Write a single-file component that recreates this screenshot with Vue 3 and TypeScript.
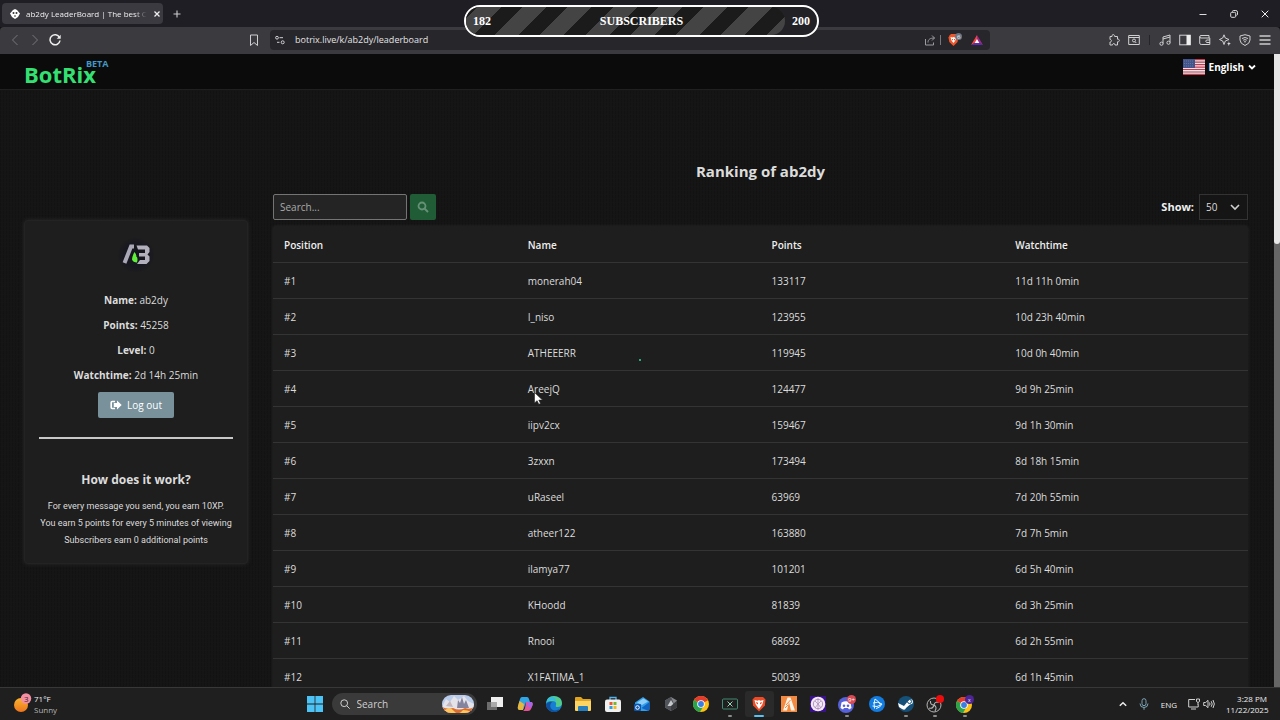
<script setup lang="ts">
import { ref } from 'vue'

interface Entry {
  name: string
  points: number
  watchtime: string
}

const entries: Entry[] = [
  { name: 'monerah04', points: 133117, watchtime: '11d 11h 0min' },
  { name: 'I_niso', points: 123955, watchtime: '10d 23h 40min' },
  { name: 'ATHEEERR', points: 119945, watchtime: '10d 0h 40min' },
  { name: 'AreejQ', points: 124477, watchtime: '9d 9h 25min' },
  { name: 'iipv2cx', points: 159467, watchtime: '9d 1h 30min' },
  { name: '3zxxn', points: 173494, watchtime: '8d 18h 15min' },
  { name: 'uRaseel', points: 63969, watchtime: '7d 20h 55min' },
  { name: 'atheer122', points: 163880, watchtime: '7d 7h 5min' },
  { name: 'ilamya77', points: 101201, watchtime: '6d 5h 40min' },
  { name: 'KHoodd', points: 81839, watchtime: '6d 3h 25min' },
  { name: 'Rnooi', points: 68692, watchtime: '6d 2h 55min' },
  { name: 'X1FATIMA_1', points: 50039, watchtime: '6d 1h 45min' },
]

const profile = [
  { label: 'Name:', value: 'ab2dy' },
  { label: 'Points:', value: '45258' },
  { label: 'Level:', value: '0' },
  { label: 'Watchtime:', value: '2d 14h 25min' },
]

const goal = { current: 182, target: 200 }
const query = ref('')
const pageSize = ref('50')
const address = ref('botrix.live/k/ab2dy/leaderboard')
const taskQuery = ref('')
</script>

<template>
  <div class="screen">
    <div class="tabstrip">
      <div class="tab">
        <svg class="i10" viewBox="0 0 10 10"><path d="M5 0 7 1 10 4.500 8 8 5 10 2 8 0 4.500 3 1Z" fill="#fff" /><circle cx="3.500" cy="4" r="1" fill="#333" /><circle cx="6.500" cy="4" r="1" fill="#333" /><path d="M4 7h2" stroke="#333" /></svg>
        <span class="tab-title">ab2dy LeaderBoard | The best C</span>
        <button class="bare" aria-label="Close tab"><svg class="i8" viewBox="0 0 8 8"><path d="M1.500 1.500l5 5M6.500 1.500l-5 5" stroke="#eee" stroke-width="1.300" /></svg></button>
      </div>
      <button class="bare newtab" aria-label="New tab"><svg class="i8" viewBox="0 0 8 8"><path d="M4 .5v7M.5 4h7" stroke="#ccc" stroke-width="1.100" /></svg></button>
      <div class="winbtns">
        <button class="bare" aria-label="Minimize"><svg class="i8" viewBox="0 0 8 8"><path d="M.5 4.500h7" stroke="#ddd" /></svg></button>
        <button class="bare" aria-label="Restore"><svg class="i8" viewBox="0 0 8 8" fill="none" stroke="#ddd"><rect x=".7" y="2.300" width="5" height="5" rx="1" /><path d="M2.500 1.800V1.500q0-1 1-1h2.300q1.700 0 1.700 1.700v2q0 1-1 1.200" /></svg></button>
        <button class="bare" aria-label="Close"><svg class="i8" viewBox="0 0 8 8"><path d="M.7.7l6.600 6.600M7.300.7L.7 7.300" stroke="#eee" /></svg></button>
      </div>
    </div>

    <div class="toolbar">
      <div class="nav">
        <button class="bare" aria-label="Back"><svg class="i12" viewBox="0 0 12 12"><path d="M8.500 1 3.500 6l5 5" class="ln dim" /></svg></button>
        <button class="bare" aria-label="Forward"><svg class="i12" viewBox="0 0 12 12"><path d="m3.500 1 5 5-5 5" class="ln dim" /></svg></button>
        <button class="bare" aria-label="Reload"><svg class="i12" viewBox="0 0 12 12"><path d="M10.500 3.500A5 5 0 1 0 11 6.500" class="ln thick" /><path d="M11.700.8v4H7.700Z" fill="#eee" /></svg></button>
      </div>
      <button class="bare bookmark" aria-label="Bookmark"><svg class="i12" viewBox="0 0 12 12"><path d="M2.500 1h7v10.500L6 8.500l-3.500 3z" class="ln" /></svg></button>
      <div class="address">
        <svg class="i10" viewBox="0 0 10 10"><g class="ln"><circle cx="2" cy="2.700" r="1.400" /><path d="M4.500 2.700H8M2 7.300h2.500" /><circle cx="7.700" cy="7.300" r="1.500" /></g></svg>
        <input v-model="address" aria-label="Address" />
        <svg class="i12" viewBox="0 0 12 12"><path d="M1.500 5v6h8V8.500M4 8.500C4 5.500 6 4 10.500 4M8 1.500 10.500 4 8 6.500" class="ln soft-line" /></svg>
        <i class="vbar"></i>
        <svg class="brave" viewBox="0 0 16 14"><path d="M2.500 2.500 4 1h5l1.500 1.500.8 2-.8 4.500L6.500 13 2.300 9 1.500 4.500Z" fill="#f1562b" /><path d="M3.500 4 5.500 4.500 6.500 4 7.500 4.500 9.500 4 8.500 7 7.700 8.500 6.500 10 5.200 8.500 4.300 7Z" fill="#fff" /><path d="M5 6h1v1.200H5zM7 6h1v1.200H7z" fill="#f1562b" /><circle cx="11.500" cy="3.500" r="3.500" fill="#6d7684" /><text x="10" y="5.600" font-size="6" fill="#fff">6</text></svg>
        <svg class="i12 bat" viewBox="0 0 12 12"><path d="M6 1v7L0 11Z" fill="#f0443c" /><path d="M6 1v7l6 3Z" fill="#97298c" /><path d="M0 11h12L6 7.500Z" fill="#5a2baa" /><path d="M6 5 3.700 9h4.600Z" fill="#fff" /></svg>
      </div>
      <div class="tools">
        <svg class="i12" viewBox="0 0 12 12"><path d="M2 2.500h2c-.5-2.500 3-2.500 2.700 0H9.500v2.700c2.500-.4 2.500 3 0 2.600V11H7c.2-2-2.500-2-2.500 0H2V8C4 8 4 5.500 2 5.500Z" class="ln" /></svg>
        <svg class="i12 after" viewBox="0 0 12 12"><path d="M.7 1.500h10.600v9H.7zM.7 3.500h10.600" class="ln" /><circle cx="6" cy="6.500" r="1.500" class="ln" /><path d="m7 7.700 1.300 1.300" class="ln" /></svg>
        <i class="vbar dark"></i>
        <svg class="i12" viewBox="0 0 12 12"><path d="M4 9.500V3l7-2v7.500M4 5l7-2" class="ln" /><circle cx="2.500" cy="9.700" r="1.600" class="ln" /><circle cx="9.500" cy="8.700" r="1.600" class="ln" /></svg>
        <svg class="i12" viewBox="0 0 12 12"><rect x=".7" y="1.200" width="10.600" height="9.600" class="ln" /><path d="M7.500 1h4v10h-4z" fill="#eee" /></svg>
        <svg class="i12" viewBox="0 0 12 12"><path d="M10 4V1.500H2Q.7 1.500.7 3v6q0 1.500 1.500 1.500h8.600V4H2Q.7 4 .7 2.700M11 6H7.500Q6 7.200 7.500 8.500H11" class="ln" /></svg>
        <svg class="i12" viewBox="0 0 12 12"><path d="M5 .8 6.300 4 10 5.500 6.300 7 5 10.500 3.700 7 .5 5.500 3.700 4Z" class="ln" /><path d="m9.800 7.300.6 1.700 1.500.6-1.500.6-.6 1.700-.6-1.700L8 9.600l1.500-.6Z" fill="#ddd" /></svg>
        <svg class="i12" viewBox="0 0 12 12"><path d="M6 .7 11 2v4q0 3.500-5 5.500Q1 9.500 1 6V2Z" class="ln" /><path d="M3 4.500q3-2 6 0M4.200 6.200q1.800-1.200 3.600 0" class="ln" /><circle cx="6" cy="7.800" r=".8" fill="#ddd" /></svg>
        <svg class="i12" viewBox="0 0 12 12"><path d="M.5 2h11M.5 6h11M.5 10h11" stroke="#ccc" stroke-width="1.500" /></svg>
      </div>
    </div>

    <div class="viewport">
      <div class="page">
        <header class="site">
          <a class="brand" href="#">BotRix<sup>BETA</sup></a>
          <button class="bare lang">
            <svg class="flag" viewBox="0 0 22 16"><path d="M0 0h22v16H0z" fill="#e9e4e6" /><path d="M0 .7h22M0 3.200h22M0 5.600h22M0 8.100h22M0 10.500h22M0 13h22M0 15.400h22" stroke="#c43a50" stroke-width="1.200" /><path d="M0 0h12v9H0z" fill="#41548c" /><path d="M1 2h10M1 4.500h10M1 7h10" stroke="#66749f" stroke-dasharray="1 1" /></svg>
            English
            <svg class="i8" viewBox="0 0 8 8"><path d="m1 2.500 3 3 3-3" class="ln bold" /></svg>
          </button>
        </header>

        <main class="columns">
          <aside class="card">
            <svg class="avatar" viewBox="0 0 40 36"><defs><radialGradient id="glow"><stop offset="0" stop-color="#15151f" /><stop offset=".7" stop-color="#181820" /><stop offset="1" stop-color="#1e1e1e" /></radialGradient></defs><ellipse cx="20" cy="18" rx="19" ry="18" fill="url(#glow)" /><path d="M8.500 26 15 9.500h3" fill="none" stroke="#aaa8b6" stroke-width="4" /><path d="M20.500 8.500H31l2.500 2.500v4l-2 2.500 2 2V24l-3 3H21l3-4h5v-3.500h-6v-3.500h6v-3.500h-7Z" fill="#b2b0bc" /><path d="M18.500 15q2 2 1.800 4.500 2 1 .7 6-4 0-5-3 .2-3.500 2.500-7.500Z" fill="#5fee39" /></svg>
            <dl class="facts">
              <div v-for="item in profile" :key="item.label"><dt>{{ item.label }}</dt>{{ ' ' }}<dd>{{ item.value }}</dd></div>
            </dl>
            <button class="logout">
              <svg class="i12" viewBox="0 0 12 12"><path d="M5 2.500H2.200q-1 0-1 1v5q0 1 1 1H5" fill="none" stroke="#fff" stroke-width="1.600" /><path d="M7 1.500 11.700 6 7 10.500V8H3.800V4H7Z" fill="#fff" /></svg>
              Log out
            </button>
            <hr />
            <h3>How does it work?</h3>
            <p>For every message you send, you earn 10XP.</p>
            <p>You earn 5 points for every 5 minutes of viewing</p>
            <p>Subscribers earn 0 additional points</p>
          </aside>

          <section class="ranking">
            <h2>Ranking of ab2dy</h2>
            <div class="controls">
              <form class="search" @submit.prevent>
                <input v-model="query" type="text" placeholder="Search..." aria-label="Search players" />
                <button aria-label="Search"><svg class="i12" viewBox="0 0 12 12"><circle cx="5" cy="5" r="3.500" fill="none" stroke="#659176" stroke-width="1.800" /><path d="m7.500 7.500 3.500 3.500" stroke="#659176" stroke-width="2" /></svg></button>
              </form>
              <div class="show">
                <label for="page-size">Show:</label>
                <span class="pick">
                  <select id="page-size" v-model="pageSize"><option>50</option><option>100</option></select>
                  <svg class="i10" viewBox="0 0 10 10"><path d="m1 3 4 4 4-4" class="ln" stroke-width="1.600" /></svg>
                </span>
              </div>
            </div>
            <table>
              <thead>
                <tr><th>Position</th><th>Name</th><th>Points</th><th>Watchtime</th></tr>
              </thead>
              <tbody>
                <tr v-for="(entry, i) in entries" :key="entry.name">
                  <td>#{{ i + 1 }}</td><td>{{ entry.name }}</td><td>{{ entry.points }}</td><td>{{ entry.watchtime }}</td>
                </tr>
              </tbody>
            </table>
          </section>
        </main>
      </div>
      <div class="scrollbar"><i></i></div>
    </div>

    <footer class="taskbar">
      <div class="weather">
        <svg class="sun" viewBox="0 0 18 20"><defs><linearGradient id="sun" x2="0" y2="1"><stop stop-color="#f9b52d" /><stop offset="1" stop-color="#ee751f" /></linearGradient></defs><circle cx="7" cy="12" r="7" fill="url(#sun)" /><circle cx="12" cy="5.500" r="5.200" fill="#f58fa0" /><text x="10" y="8.500" font-size="8" fill="#33202a">3</text></svg>
        <div><div>71°F</div><div class="soft">Sunny</div></div>
      </div>
      <div class="dock">
        <button class="bare start" aria-label="Start"><svg class="i16" viewBox="0 0 16 16"><path d="M0 0h7.600v7.600H0zM8.400 0H16v7.600H8.400zM0 8.400h7.600V16H0zM8.400 8.400H16V16H8.400z" fill="#4cc2f5" /></svg></button>
        <label class="tasksearch">
          <svg class="i10" viewBox="0 0 10 10"><circle cx="4.200" cy="4.200" r="3.400" class="ln" /><path d="m6.700 6.700 3 3" class="ln" /></svg>
          <input v-model="taskQuery" placeholder="Search" aria-label="Search Windows" />
          <svg class="scene" viewBox="0 0 32 18"><defs><clipPath id="pill"><rect width="32" height="18" rx="9" /></clipPath></defs><g clip-path="url(#pill)"><path d="M0 0h32v18H0z" fill="#b9cbea" /><path d="M0 12 4 4l4 3 4-6 4 4 6-4 4 5 6 3v9H0Z" fill="#e4e3ea" /><path d="m15 13 1-8 2 3 2-6 2 7 2-4 3 8Z" fill="#85849f" /><path d="m4 11 4-5 3 6Z" fill="#c2b5bb" /><path d="M0 12q6 3 11 1 6 3 12 0 5 2 9-1v6H0Z" fill="#dc6c2c" /><path d="M3 15q5-4 9 1t9-1q5 0 8 2v1H3Z" fill="#ffc55a" /></g></svg>
        </label>
        <div class="apps">
          <button class="bare" aria-label="Task view"><svg class="i16" viewBox="0 0 16 16"><path d="M0 6h10v8H0z" fill="#6c6c6c" /><path d="M4 1h12v10H4z" fill="#eee" /><path d="M4 6h6v5H4z" fill="#aaa" /></svg></button>
          <button class="bare" aria-label="Copilot"><svg class="i16" viewBox="0 0 16 16"><path d="M5 1h5q1.500 0 2 2l1 3H9L7 12q-.7 2-2 2H3q-3 0-2-4L3 3q.5-2 2-2Z" fill="#31a6e7" /><path d="M1 10 2.500 5 7 8l-1 6H3q-3 0-2-4Z" fill="#e8b63a" /><path d="M9 6h4q3.500 0 2.500 3.500L14 13q-.6 2-3 2H6q1.300-.5 2-3Z" fill="#e35595" /><path d="m11 6 4 0q1 1 .5 3L14 12l-4-2Z" fill="#a965e3" /></svg></button>
          <button class="bare" aria-label="Edge"><svg class="i16" viewBox="0 0 16 16"><circle cx="8" cy="8" r="8" fill="#167fd1" /><path d="M.3 7Q1 0 8 0q7.700.5 8 7 0 4-4.500 4Q9 11 10 9q1-4-4-4Q1.500 5 .3 7Z" fill="#52cb8b" /><path d="M.3 7Q1 1 7 1q3 1 3 5Q8 3.500 5 4 2 4.500.3 7Z" fill="#35bce4" /><path d="M6 6Q3 9 5 12.500 8 16 13.500 13q-2.500 4-7 2.800Q0 14 0 8.500 2 5 6 6Z" fill="#11509d" /></svg></button>
          <button class="bare" aria-label="File Explorer"><svg class="i16" viewBox="0 0 16 16"><path d="M0 2q0-1 1-1h5l2 2h7q1 0 1 1v10H0Z" fill="#e0a420" /><path d="M0 5h16v9q0 1-1 1H1q-1 0-1-1Z" fill="#fbd463" /><path d="M3 15v-4q0-1 1-1h8q1 0 1 1v4Z" fill="#257fbe" /></svg></button>
          <button class="bare" aria-label="Store"><svg class="i16" viewBox="0 0 16 16"><path d="M5 4V1.500h6V4" fill="none" stroke="#55b4ec" stroke-width="1.300" /><rect y="3.500" width="16" height="12.500" rx="2" fill="#f0f0f0" /><path d="M4.500 6h3v3h-3z" fill="#ef5430" /><path d="M8.500 6h3v3h-3z" fill="#77b72e" /><path d="M4.500 10h3v3h-3z" fill="#289fe0" /><path d="M8.500 10h3v3h-3z" fill="#f4b825" /></svg></button>
          <button class="bare" aria-label="Outlook"><svg class="i16" viewBox="0 0 16 16"><path d="M1 6.500 9 1l6.500 4.500V13q0 2-2 2H3q-2 0-2-2Z" fill="#2f9fea" /><path d="m3 6.500 6.500-4L14 5.500 8 9Z" fill="#8fcdf7" /><path d="m15.500 6-8 6 7 3q1-1 1-2Z" fill="#1262c4" /><rect y="8" width="7" height="7" rx="1" fill="#0e55ae" /><circle cx="3.500" cy="11.500" r="1.800" fill="none" stroke="#fff" /></svg></button>
          <button class="bare" aria-label="Launcher"><svg class="i16" viewBox="0 0 16 16"><path d="m8 1 6 3.500v7L8 15l-6-3.500v-7Z" fill="#85878b" /><path d="m8 1 3 7-3 7-6-3.500v-7Z" fill="#505359" /><path d="m8 4 3.500 6h-7Z" fill="#c6c8cc" /><path d="M8 15v-5l6-5.500v7Z" fill="#3a3c40" /></svg></button>
          <button class="bare" aria-label="Chrome"><svg class="i16" viewBox="0 0 16 16"><circle cx="8" cy="8" r="8" fill="#fbc116" /><path d="M8 8 1.100 4A8 8 0 0 1 15 4.300Z" fill="#e33b2e" /><path d="M8 8 1.100 4A8 8 0 0 0 7 16l3.500-6Z" fill="#2ba24c" /><circle cx="8" cy="8" r="3.800" fill="#fff" /><circle cx="8" cy="8" r="2.900" fill="#3b7de0" /></svg></button>
          <button class="bare run" aria-label="Xbox remote"><svg class="i16" viewBox="0 0 16 16"><rect x=".5" y="3" width="15" height="10" rx="1" fill="none" stroke="#458a74" /><path d="m5.500 5.500 5 5M10.500 5.500l-5 5" stroke="#9bd4bb" /></svg></button>
          <button class="bare active" aria-label="Brave"><svg class="i16" viewBox="0 0 16 16"><path d="m4 1 8 0 2.500 2.500-.6 6L8 15.500 2 9.500 1.500 3.500Z" fill="#ef4a26" /><path d="m3.500 4 3 .7L8 4l1.500.7 3-.7-1 4L9.500 11 8 13l-1.500-2-2-3Z" fill="#fff" /><path d="m5 6 2 .7v1.800L5.500 7.600ZM11 6l-2 .7v1.800l1.500-.9Z" fill="#ef4a26" /></svg></button>
          <button class="bare" aria-label="FiveM"><svg class="i16" viewBox="0 0 16 16"><path d="M0 0h16v16H0z" fill="#f28a42" /><path d="M6.500 1.500h3L14 14.500h-4L8 6l-2 8.500H2Z" fill="#fff4e9" /><path d="m5 9 4.500-5M4 12l3-3" stroke="#f28a42" /></svg></button>
          <button class="bare" aria-label="Circle app"><svg class="i16" viewBox="0 0 16 16"><path d="M0 0h16v16H0z" fill="#391188" /><circle cx="8" cy="8" r="7.300" fill="#f4eaf7" /><circle cx="8" cy="8" r="4.700" fill="none" stroke="#ae91bb" /><path d="M8 2v12M5 5l3 3 3-3M5 12l3-4 3 4" fill="none" stroke="#ae91bb" stroke-width=".8" /></svg></button>
          <button class="bare run" aria-label="Discord"><svg class="i18" viewBox="0 0 18 18"><circle cx="8" cy="10" r="8" fill="#5662d9" /><path d="M3.500 7.500Q8 5 12.500 7.500l1 5.500-2.500 1.500-1-1.500H6l-1 1.500L2.500 13Z" fill="#fff" /><circle cx="6" cy="10.800" r="1.300" fill="#5662d9" /><circle cx="10" cy="10.800" r="1.300" fill="#5662d9" /><circle cx="13.500" cy="4.500" r="4.500" fill="#d94a55" /><text x="10" y="7" font-size="6" fill="#fff">9+</text></svg></button>
          <button class="bare" aria-label="Battle.net"><svg class="i16" viewBox="0 0 16 16"><circle cx="8" cy="8" r="8" fill="#137ce0" /><g fill="none" stroke="#e8f5ff"><path d="M5.500 12.500Q4.500 8 6 3q5 3 5.500 6-3 2.500-8 1M4 7q5-2 9 1-2 4-6 4.500" /></g></svg></button>
          <button class="bare run" aria-label="Steam"><svg class="i16" viewBox="0 0 16 16"><circle cx="8" cy="8" r="8" fill="#155078" /><path d="m0 7 6 3 4-5q2-3 4.500-1 1.500 4-2.500 4.500L8 12q-1 3-4 1L1 11Z" fill="#fff" /><circle cx="11.500" cy="5.500" r="2" fill="none" stroke="#155078" /></svg></button>
          <button class="bare run" aria-label="OBS Studio"><svg class="i18" viewBox="0 0 18 18"><circle cx="8" cy="10" r="7" fill="#222" stroke="#b5b5b5" /><path d="M8 10q-4 0-3.500-4M8 10q1-4 5-2.500M8 10q3.500 2 1 6M3 13q4 1 5-3" fill="none" stroke="#b5b5b5" stroke-width="1.100" /><circle cx="14" cy="4" r="4" fill="#ed0d0d" /></svg></button>
          <button class="bare run" aria-label="Chrome profile"><svg class="i18" viewBox="0 0 18 18"><circle cx="8" cy="10" r="8" fill="#fbc116" /><path d="M8 10 1.100 6A8 8 0 0 1 15 6.300Z" fill="#e33b2e" /><path d="M8 10 1.100 6A8 8 0 0 0 7 18l3.500-6Z" fill="#2ba24c" /><circle cx="8" cy="10" r="3.800" fill="#fff" /><circle cx="8" cy="10" r="2.900" fill="#3b7de0" /><circle cx="13.500" cy="4.500" r="4.500" fill="#4d2597" /><text x="12" y="6.500" font-size="5" fill="#fff">x</text></svg></button>
        </div>
      </div>
      <div class="tray">
        <svg class="i8" viewBox="0 0 8 8"><path d="m.8 5.700 3.200-3 3.200 3" class="ln thick" /></svg>
        <svg class="i12" viewBox="0 0 12 12"><rect x="4" y=".7" width="4" height="7" rx="2" fill="none" stroke="#7ba5b5" /><path d="M2 5.500q0 4 4 4t4-4M6 9.500v2.300" fill="none" stroke="#7ba5b5" /></svg>
        <span class="ime">ENG</span>
        <span class="status">
          <svg class="i12" viewBox="0 0 12 12"><path d="M7 1.500H.7V9h9.500V6.500M3 11h5" class="ln" /><path d="M8.500 1v2.500q1.500 2 3 0V1zM10 4.500V7" class="ln" /></svg>
          <svg class="i12" viewBox="0 0 12 12"><path d="M.7 4.500h2L5 2.300v7.400L2.700 7.500h-2ZM6.500 4.500q1 1.500 0 3M8.200 3.200q2 2.800 0 5.600M10 2q2.700 4 0 8" class="ln" /></svg>
        </span>
        <div class="clock"><div>3:28 PM</div><div>11/22/2025</div></div>
      </div>
    </footer>

    <div class="goal">
      <div class="goal-fill" :style="{ width: (goal.current / goal.target) * 100 + '%' }"></div>
      <div class="goal-text"><span>{{ goal.current }}</span><span>SUBSCRIBERS</span><span>{{ goal.target }}</span></div>
    </div>
    <i class="spark"></i>
    <svg class="pointer" viewBox="0 0 9 13"><path d="M.5.5v10.500l2.600-2.300L4.800 12.300l1.700-.8-1.700-3.400H8.500Z" fill="#fff" stroke="#222" stroke-width=".6" /></svg>
  </div>
</template>

<style>
body {
  background: #131313;
}
</style>

<style scoped>
* {
  box-sizing: border-box;
}
.screen {
  position: relative;
  display: flex;
  flex-direction: column;
  height: 100vh;
  overflow: hidden;
  font: 10px/16px "Open Sans", "Noto Sans", sans-serif;
  color: #dcdcdc;
}
svg {
  display: block;
  flex: none;
}
svg text {
  font-family: "Open Sans", sans-serif;
}
button, input, select {
  font: inherit;
  color: inherit;
}
.bare {
  display: flex;
  align-items: center;
  justify-content: center;
  padding: 0;
  border: 0;
  background: none;
}
.i8 { width: 8px; height: 8px; }
.i10 { width: 10px; height: 10px; }
.i12 { width: 12px; height: 12px; }
.i16 { width: 16px; height: 16px; }
.i18 { width: 18px; height: 18px; }
.ln {
  fill: none;
  stroke: #d0d0d2;
}
.dim { stroke: #77767c; }
.soft-line { stroke: #9c9ba0; }
.thick { stroke-width: 1.5; stroke: #eee; }
.bold { stroke-width: 1.8; stroke: #fff; }

.tabstrip {
  display: flex;
  flex: none;
  align-items: center;
  height: 27px;
  padding: 0 11px 0 2px;
  background: #1f1e24;
}
.tab {
  display: flex;
  align-items: center;
  gap: 6px;
  width: 161px;
  height: 21px;
  padding: 0 6px 0 8px;
  border-radius: 4px;
  background: #3b3a40;
  font-size: 8px;
  color: #eee;
}
.tab-title {
  flex: 1;
  white-space: nowrap;
  mask-image: linear-gradient(90deg, #000 90%, transparent);
}
.newtab { margin-left: 10px; }
.winbtns {
  display: flex;
  gap: 23px;
  margin-left: auto;
}
.toolbar {
  display: flex;
  flex: none;
  align-items: center;
  height: 27px;
  padding: 0 9px 1px;
  border-radius: 4px 4px 0 0;
  background: #3b3a3f;
}
.nav {
  display: flex;
  gap: 8px;
}
.bookmark {
  margin-left: 187px;
  margin-right: 10px;
}
.address {
  display: flex;
  flex: 1;
  align-items: center;
  gap: 4px;
  height: 20px;
  max-width: 720px;
  padding: 0 7px 0 5px;
  border-radius: 4px;
  background: #27262b;
}
.address input {
  flex: 1;
  min-width: 0;
  padding: 0 0 0 6px;
  border: 0;
  background: none;
  font-size: 9px;
  color: #e4e4e6;
}
.vbar {
  width: 1px;
  height: 10px;
  background: #77767c;
}
.vbar.dark { background: #252429; }
.brave {
  width: 16px;
  height: 14px;
  margin-left: 2px;
}
.bat { margin-left: 4px; }
.tools {
  display: flex;
  align-items: center;
  gap: 8px;
  margin-left: auto;
}
.tools .after { margin-right: 1px; }
.tools .dark { margin-right: 1px; }

.viewport {
  display: flex;
  flex: 1;
  min-height: 0;
  background: #131313;
}
.page {
  flex: 1;
  min-width: 0;
  overflow: hidden;
  background:
    repeating-linear-gradient(0deg, #16161688 0 1px, transparent 1px 4px),
    repeating-linear-gradient(90deg, #10101088 0 1px, transparent 1px 3px),
    #151515;
}
.scrollbar {
  width: 6px;
  background: #666;
}
.scrollbar i {
  display: block;
  height: 30%;
  border-radius: 0 0 3px 3px;
  background: #e6e6e6;
}
.site {
  display: flex;
  justify-content: space-between;
  align-items: flex-start;
  height: 36px;
  padding: 0 18px 0 24px;
  border-bottom: 1px solid #202020;
  background: #0b0b0b;
}
.brand {
  display: flex;
  align-items: flex-start;
  color: #35e073;
  font-size: 22px;
  font-weight: 700;
  line-height: 41px;
  text-decoration: none;
}
.brand sup {
  margin-left: -10px;
  color: #4197c5;
  font-size: 9px;
  line-height: 20px;
}
.lang {
  gap: 4px;
  height: 25px;
  color: #fff;
  font-weight: 700;
}
.flag {
  width: 22px;
  height: 16px;
}
.columns {
  display: grid;
  grid-template-columns: 224px 1fr;
  align-items: start;
  gap: 25px;
  padding: 0 26px 0 24px;
}
.card {
  display: flex;
  flex-direction: column;
  align-items: center;
  margin-top: 130px;
  padding: 16px 14px 14px;
  border: 1px solid #232323;
  border-radius: 4px;
  background: #1e1e1e;
  box-shadow: 0 0 4px #2a2a2a;
  text-align: center;
}
.avatar {
  width: 40px;
  height: 36px;
}
.facts {
  margin: 15px 0 4px;
  line-height: 25px;
}
.facts dt, .facts dd {
  display: inline;
  margin: 0;
}
.facts dt { font-weight: 700; }
.logout {
  display: flex;
  align-items: center;
  gap: 5px;
  height: 26px;
  padding: 0 12px;
  border: 0;
  border-radius: 2px;
  background: #78919b;
  color: #fff;
}
hr {
  width: 100%;
  height: 2px;
  margin: 19px 0 33px;
  border: 0;
  background: #c8c8c8;
}
h3 {
  margin: 0 0 10px;
  font-size: 12px;
  line-height: 16px;
}
.card p {
  margin: 0;
  font-family: Roboto, "Open Sans", sans-serif;
  font-size: 9px;
  line-height: 17px;
  white-space: nowrap;
}
h2 {
  margin: 69px 0 11px;
  font-size: 15px;
  line-height: 24px;
  text-align: center;
}
.controls {
  display: flex;
  justify-content: space-between;
  height: 26px;
  margin-bottom: 6px;
}
.search {
  display: flex;
  gap: 3px;
}
.search input {
  width: 134px;
  padding: 0 6px;
  border: 1px solid #747474;
  border-radius: 2px;
  background: #242424;
}
.search input::placeholder {
  color: #aaa;
}
.search button {
  display: grid;
  place-items: center;
  width: 26px;
  padding: 0;
  border: 0;
  border-radius: 2px;
  background: #205c35;
}
.show {
  display: flex;
  align-items: center;
  gap: 5px;
}
.show label {
  color: #f0f0f0;
  font-size: 11px;
  font-weight: 700;
}
.pick {
  display: grid;
  align-items: center;
  height: 26px;
}
.pick > * {
  grid-area: 1 / 1;
}
.pick svg {
  justify-self: end;
  margin-right: 8px;
  pointer-events: none;
}
select {
  width: 49px;
  height: 26px;
  padding: 0 6px;
  border: 1px solid #333;
  background: #151515;
  appearance: none;
}
table {
  width: 100%;
  border-collapse: collapse;
  table-layout: fixed;
  background: #1e1e1e;
  border-radius: 3px;
  box-shadow: 0 0 3px #2c2c2c;
}
th, td {
  height: 36px;
  padding: 2px 11px 0;
  border-bottom: 1px solid #343434;
  text-align: left;
}
th { font-weight: 600; color: #eee; }

.taskbar {
  display: grid;
  flex: none;
  grid-template-columns: 1fr auto 1fr;
  align-items: center;
  height: 33px;
  border-top: 1px solid #383838;
  background: #1f1f1f;
  font-size: 8px;
  line-height: 11px;
}
.weather {
  display: flex;
  gap: 2px;
  padding-left: 14px;
  padding-bottom: 1px;
  color: #f0f0f0;
}
.sun {
  width: 18px;
  height: 20px;
}
.soft { color: #b4b4b4; }
.dock {
  display: flex;
  align-items: center;
  height: 32px;
}
.start {
  width: 29px;
  margin-right: 2px;
}
.tasksearch {
  display: flex;
  align-items: center;
  gap: 7px;
  width: 145px;
  height: 22px;
  margin-right: 4px;
  padding: 0 3px 0 8px;
  border-radius: 11px;
  background: #3a3a3a;
}
.tasksearch input {
  flex: 1;
  min-width: 0;
  padding: 0;
  border: 0;
  background: none;
  font-size: 10px;
}
.tasksearch input::placeholder { color: #d0d0d0; }
.scene {
  width: 32px;
  height: 18px;
}
.apps {
  display: grid;
  grid-template-columns: repeat(17, 1fr);
  width: 499px;
  height: 26px;
}
.apps .bare {
  position: relative;
  border-radius: 3px;
}
.apps .active { background: #2a2a2a; }
.apps .run::after, .apps .active::after {
  content: "";
  position: absolute;
  bottom: 0;
  left: 50%;
  width: 4px;
  height: 2px;
  border-radius: 1px;
  background: #8c8c8c;
  transform: translateX(-50%);
}
.apps .active::after {
  width: 10px;
  background: #5cc1ee;
}
.tray {
  display: flex;
  align-items: center;
  justify-content: flex-end;
  gap: 11px;
  padding-right: 13px;
  color: #eee;
}
.status {
  display: flex;
  gap: 3px;
}
.clock {
  width: 41px;
  text-align: right;
}
.goal {
  position: absolute;
  top: 5px;
  left: 50%;
  width: 355px;
  height: 32px;
  border: 2px solid #fff;
  border-radius: 16px;
  background: #222126;
  overflow: hidden;
  transform: translateX(-176px);
  color: #fff;
  font: 700 12px/28px "Liberation Serif", serif;
}
.goal-fill {
  height: 100%;
  border-radius: 0 14px 14px 0;
  background: repeating-linear-gradient(135deg, #1b1b1b 0 8px, #444 8px 25px, #1b1b1b 25px 32px);
}
.goal-text {
  position: absolute;
  inset: 0;
  display: flex;
  justify-content: space-between;
  padding: 0 7px;
}
.spark {
  position: absolute;
  top: 359px;
  left: 639px;
  width: 2px;
  height: 2px;
  background: #2ba583;
}
.pointer {
  position: absolute;
  top: 392px;
  left: 534px;
  width: 9px;
  height: 13px;
}
</style>
